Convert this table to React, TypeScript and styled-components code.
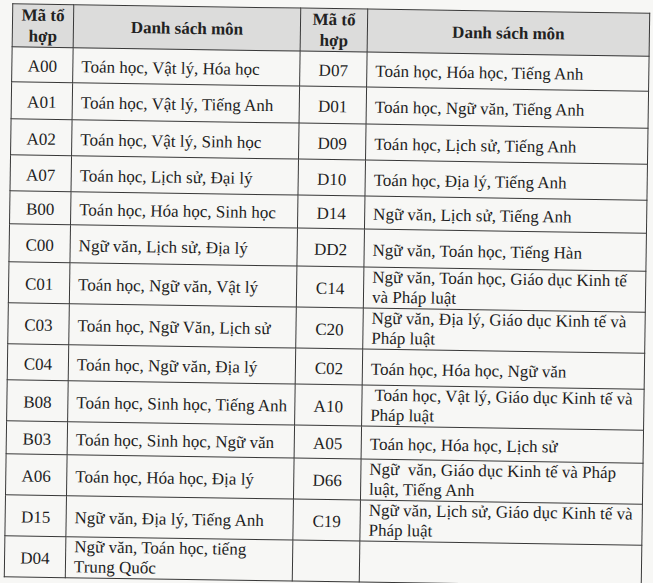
import React from 'react';
import styled, { createGlobalStyle } from 'styled-components';

const serif = '"Liberation Serif", "Times New Roman", serif';

const GlobalStyle = createGlobalStyle`
	html, body {
		margin: 0;
		padding: 0;
		background: #f7f7f5;
	}
	body {
		padding: 8px;
		font-family: ${serif};
		color: #1e1e1e;
	}
	table, th, td {
		font-family: ${serif};
	}
`;

const lineColor = '#383838';

// the scan is a little tilted, so is the sheet
const Sheet = styled.div`
	width: 637px;
	transform: rotate(0.85deg);
	transform-origin: 50% 50%;
`;

const Table = styled.table`
	width: 637px;
	table-layout: fixed;
	border-collapse: collapse;
	border: 1.5px solid ${lineColor};
	font-size: 17px;
	line-height: 19px;
	color: #1e1e1e;
`;

const Row = styled.tr<{ h: number }>`
	height: ${({ h }) => h}px;
`;

const HeaderCell = styled.th`
	background: #dcdcdb;
	border: 1.5px solid ${lineColor};
	font-weight: bold;
	text-align: center;
	vertical-align: middle;
	padding: 0 2px;
	line-height: 21px;
	color: #222;
`;

const CodeCell = styled.td`
	border: 1.5px solid ${lineColor};
	text-align: center;
	vertical-align: middle;
	padding: 3px 0 0;
`;

const SubjectCell = styled.td<{ multi?: boolean }>`
	border: 1.5px solid ${lineColor};
	text-align: left;
	vertical-align: middle;
	white-space: pre;
	line-height: ${({ multi }) => multi ? '20px' : '19px'};
	padding: ${({ multi }) => multi ? '0 4px 0 8px' : '3px 4px 0 8px'};
`;

type Subjects = string | string[];

interface IPair {
	code: string;
	subjects: Subjects;
}

interface IRow {
	h: number;
	left: IPair;
	right: IPair;
}

const rows: IRow[] = [
	{ h: 35, left: { code: 'A00', subjects: 'Toán học, Vật lý, Hóa học' }, right: { code: 'D07', subjects: 'Toán học, Hóa học, Tiếng Anh' } },
	{ h: 37, left: { code: 'A01', subjects: 'Toán học, Vật lý, Tiếng Anh' }, right: { code: 'D01', subjects: 'Toán học, Ngữ văn, Tiếng Anh' } },
	{ h: 36, left: { code: 'A02', subjects: 'Toán học, Vật lý, Sinh học' }, right: { code: 'D09', subjects: 'Toán học, Lịch sử, Tiếng Anh' } },
	{ h: 36, left: { code: 'A07', subjects: 'Toán học, Lịch sử, Đại lý' }, right: { code: 'D10', subjects: 'Toán học, Địa lý, Tiếng Anh' } },
	{ h: 33, left: { code: 'B00', subjects: 'Toán học, Hóa học, Sinh học' }, right: { code: 'D14', subjects: 'Ngữ văn, Lịch sử, Tiếng Anh' } },
	{ h: 38, left: { code: 'C00', subjects: 'Ngữ văn, Lịch sử, Địa lý' }, right: { code: 'DD2', subjects: 'Ngữ văn, Toán học, Tiếng Hàn' } },
	{ h: 40, left: { code: 'C01', subjects: 'Toán học, Ngữ văn, Vật lý' }, right: { code: 'C14', subjects: ['Ngữ văn, Toán học, Giáo dục Kinh tế', 'và Pháp luật'] } },
	{ h: 40, left: { code: 'C03', subjects: 'Toán học, Ngữ Văn, Lịch sử' }, right: { code: 'C20', subjects: ['Ngữ văn, Địa lý, Giáo dục Kinh tế và', 'Pháp luật'] } },
	{ h: 36, left: { code: 'C04', subjects: 'Toán học, Ngữ văn, Địa lý' }, right: { code: 'C02', subjects: 'Toán học, Hóa học, Ngữ văn' } },
	{ h: 40, left: { code: 'B08', subjects: 'Toán học, Sinh học, Tiếng Anh' }, right: { code: 'A10', subjects: [' Toán học, Vật lý, Giáo dục Kinh tế và', 'Pháp luật'] } },
	{ h: 33, left: { code: 'B03', subjects: 'Toán học, Sinh học, Ngữ văn' }, right: { code: 'A05', subjects: 'Toán học, Hóa học, Lịch sử' } },
	{ h: 40, left: { code: 'A06', subjects: 'Toán học, Hóa học, Địa lý' }, right: { code: 'D66', subjects: ['Ngữ  văn, Giáo dục Kinh tế và Pháp', 'luật, Tiếng Anh'] } },
	{ h: 40, left: { code: 'D15', subjects: 'Ngữ văn, Địa lý, Tiếng Anh' }, right: { code: 'C19', subjects: ['Ngữ văn, Lịch sử, Giáo dục Kinh tế và', 'Pháp luật'] } },
	{ h: 40, left: { code: 'D04', subjects: ['Ngữ văn, Toán học, tiếng', 'Trung Quốc'] }, right: { code: '', subjects: '' } },
];

const renderSubjects = (subjects: Subjects) => {
	if (typeof subjects === 'string') {
		return subjects;
	}
	return subjects.map((line, i) => (
		<React.Fragment key={i}>
			{i > 0 && <br/>}
			{line}
		</React.Fragment>
	));
};

const Pair: React.FC<IPair> = ({ code, subjects }) => (
	<React.Fragment>
		<CodeCell>{code}</CodeCell>
		<SubjectCell multi={Array.isArray(subjects)}>{renderSubjects(subjects)}</SubjectCell>
	</React.Fragment>
);

const App: React.FC = () => (
	<React.Fragment>
		<GlobalStyle/>
		<Sheet>
			<Table>
				<colgroup>
					<col style={{ width: 61 }}/>
					<col style={{ width: 227 }}/>
					<col style={{ width: 67 }}/>
					<col style={{ width: 282 }}/>
				</colgroup>
				<thead>
					<Row h={43}>
						<HeaderCell>Mã tổ<br/>hợp</HeaderCell>
						<HeaderCell>Danh sách môn</HeaderCell>
						<HeaderCell>Mã tổ<br/>hợp</HeaderCell>
						<HeaderCell>Danh sách môn</HeaderCell>
					</Row>
				</thead>
				<tbody>
					{rows.map(({ h, left, right }) => (
						<Row key={left.code} h={h}>
							<Pair {...left}/>
							<Pair {...right}/>
						</Row>
					))}
				</tbody>
			</Table>
		</Sheet>
	</React.Fragment>
);

export default App;
